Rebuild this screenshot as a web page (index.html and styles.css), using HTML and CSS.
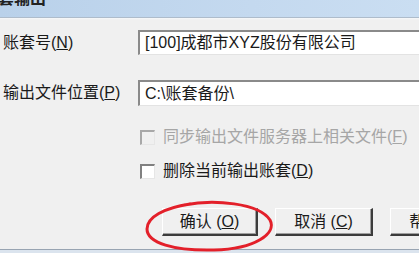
FILE: index.html
```html
<!DOCTYPE html>
<html lang="zh-CN">
<head>
<meta charset="utf-8">
<title>账套输出</title>
<link rel="stylesheet" href="styles.css">
</head>
<body>
<div class="window">
  <div class="titlebar"><span class="title">套输出</span></div>
  <div class="frame-line"></div>
  <div class="content">
    <div class="row row-first">
      <label class="label">账套号(<u>N</u>)</label>
      <div class="field">[100]成都市XYZ股份有限公司</div>
    </div>
    <div class="row row-second">
      <label class="label">输出文件位置(<u>P</u>)</label>
      <div class="field">C:\账套备份\</div>
    </div>
    <div class="check check-first disabled">
      <span class="box"></span>
      <span class="check-text">同步输出文件服务器上相关文件(<u>F</u>)</span>
    </div>
    <div class="check check-second">
      <span class="box"></span>
      <span class="check-text">删除当前输出账套(<u>D</u>)</span>
    </div>
    <div class="buttons">
      <div class="btn btn-ok">确认 (<u>O</u>)</div>
      <div class="btn btn-cancel">取消 (<u>C</u>)</div>
      <div class="btn btn-help">帮助 (<u>H</u>)</div>
      <svg class="mark" width="132" height="54" viewBox="0 0 132 54">
        <path d="M40 5 C 70 -1, 115 3, 126 20 C 133 33, 112 49, 70 50 C 30 51, 3 43, 3 29 C 3 17, 20 8, 46 4" fill="none" stroke="#e3202a" stroke-width="3" stroke-linecap="round"/>
      </svg>
    </div>
  </div>
  <div class="bottom-line"></div>
  <div class="bottom-area"></div>
</div>
</body>
</html>
```

FILE: styles.css
```css
html, body {
  margin: 0;
  padding: 0;
  background: #f0f0f0;
}

.window {
  width: 419px;
  height: 253px;
  overflow: hidden;
  display: flex;
  flex-direction: column;
  background: #f0f0f0;
  font-family: "Liberation Sans", "Noto Sans CJK SC", sans-serif;
  font-size: 16px;
  color: #1a1a1a;
}

.titlebar {
  height: 17px;
  flex-shrink: 0;
  overflow: hidden;
  background: linear-gradient(to right, #b9d1ea, #c4d9ef 60%, #cadef2);
}

.title {
  display: block;
  margin-top: -9px;
  margin-left: -2px;
  font-size: 16px;
  line-height: 16px;
  color: #222;
  font-weight: bold;
}

.frame-line {
  height: 3px;
  flex-shrink: 0;
  background: linear-gradient(to bottom, #aebccb 0, #aebccb 1px, #f6f8fa 1px, #f0f0f0 3px);
}

.content {
  flex: 1;
  display: flex;
  flex-direction: column;
  padding-top: 10px;
}

.row {
  display: flex;
  align-items: center;
  height: 25px;
  flex-shrink: 0;
}

.row-second {
  margin-top: 25px;
  height: 26px;
}

.label {
  width: 135px;
  flex-shrink: 0;
  padding-left: 3px;
  line-height: 16px;
}

.field {
  flex-shrink: 0;
  width: 320px;
  height: 100%;
  box-sizing: border-box;
  background: #fff;
  border-top: 2px solid #8a8a8a;
  border-left: 2px solid #8a8a8a;
  border-bottom: 1px solid #e3e3e3;
  border-right: 1px solid #e3e3e3;
  padding-left: 5px;
  display: flex;
  align-items: center;
  line-height: 16px;
  white-space: nowrap;
}

.check {
  display: flex;
  align-items: center;
  padding-left: 140px;
  height: 16px;
  flex-shrink: 0;
  white-space: nowrap;
}

.check-first {
  margin-top: 23px;
}

.check-second {
  margin-top: 18px;
}

.box {
  width: 15px;
  height: 15px;
  box-sizing: border-box;
  flex-shrink: 0;
  background: #fff;
  border-top: 2px solid #808080;
  border-left: 2px solid #808080;
  border-bottom: 1px solid #e6e6e6;
  border-right: 1px solid #e6e6e6;
}

.disabled .box {
  background: #f0f0f0;
  border-top-color: #a8a8a8;
  border-left-color: #a8a8a8;
}

.check-text {
  margin-left: 8px;
  line-height: 16px;
}

.disabled .check-text {
  color: #a6a6a6;
}

.buttons {
  position: relative;
  display: flex;
  gap: 17px;
  padding-left: 162px;
  margin-top: 29px;
  flex-shrink: 0;
}

.btn {
  flex-shrink: 0;
  width: 96px;
  height: 28px;
  box-sizing: border-box;
  display: flex;
  align-items: center;
  justify-content: center;
  background: #f0f0f0;
  border-top: 1px solid #ffffff;
  border-left: 1px solid #ffffff;
  border-right: 2px solid #3c3c3c;
  border-bottom: 2px solid #3c3c3c;
  box-shadow: inset -1px -1px 0 #a0a0a0;
  line-height: 16px;
  white-space: nowrap;
  color: #1a1a1a;
}

.btn-cancel {
  width: 98px;
}

.btn-help {
  width: 98px;
}

.mark {
  position: absolute;
  left: 144px;
  top: -8px;
}

.bottom-line {
  height: 1px;
  flex-shrink: 0;
  background: #98a4b2;
}

.bottom-area {
  height: 3px;
  flex-shrink: 0;
  background: #dbe4ee;
}
```
